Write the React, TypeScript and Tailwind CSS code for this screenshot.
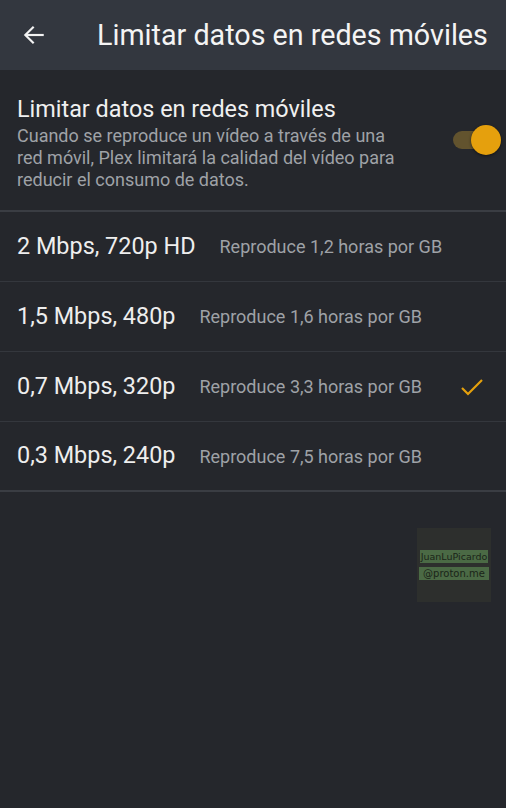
import React from "react";

const options = [
  { label: "2 Mbps, 720p HD", hint: "Reproduce 1,2 horas por GB", selected: false },
  { label: "1,5 Mbps, 480p", hint: "Reproduce 1,6 horas por GB", selected: false },
  { label: "0,7 Mbps, 320p", hint: "Reproduce 3,3 horas por GB", selected: true },
  { label: "0,3 Mbps, 240p", hint: "Reproduce 7,5 horas por GB", selected: false },
];

function BackArrow() {
  return (
    <svg width="26" height="26" viewBox="0 0 24 24" fill="none" stroke="#f2f2f2" strokeWidth="2" strokeLinecap="square">
      <path d="M20 12H5" />
      <path d="M11 5l-7 7 7 7" />
    </svg>
  );
}

function Check() {
  return (
    <svg width="24" height="20" viewBox="0 0 24 20" fill="none" stroke="#e5a00d" strokeWidth="2.2">
      <path d="M2 11l6 6L22 3" />
    </svg>
  );
}

export default function App() {
  return (
    <div className="h-[808px] w-[506px] bg-[#25272c] font-['Roboto',sans-serif] overflow-hidden">
      <header className="flex h-[70px] items-center bg-[#33373f]">
        <div className="ml-[21px] flex w-[76px] items-center">
          <BackArrow />
        </div>
        <h1 className="text-[28.7px] text-[#f4f4f4] leading-none whitespace-nowrap">Limitar datos en redes móviles</h1>
      </header>

      <div className="flex items-center pl-[17px] pr-[6px] pt-[25px] pb-[19px] border-b-2 border-[#3a3d43]">
        <div className="flex-1">
          <div className="text-[23.4px] leading-[28px] text-[#f0f0f0]">Limitar datos en redes móviles</div>
          <div className="mt-[2px] text-[18px] leading-[22px] text-[#9fa2a7]">
            Cuando se reproduce un vídeo a través de una
            <br />
            red móvil, Plex limitará la calidad del vídeo para
            <br />
            reducir el consumo de datos.
          </div>
        </div>
        <div className="relative mb-[6px] h-[18px] w-[47px]">
          <div className="absolute left-0 top-0 h-[18px] w-[38px] rounded-full bg-[#62532e]" />
          <div className="absolute left-[18px] top-[-6px] h-[30px] w-[30px] rounded-full bg-[#e5a00d] shadow-[0_1px_3px_rgba(0,0,0,0.5)]" />
        </div>
      </div>

      <div>
        {options.map((o, i) => (
          <div
            key={o.label}
            className={
              "flex h-[70px] items-center pl-[17px] pr-[22px] " +
              (i === options.length - 1 ? "border-b-2 border-[#3a3d43]" : "border-b border-[#34373d]")
            }
          >
            <span className="text-[23.4px] text-[#eeeeee] whitespace-nowrap">{o.label}</span>
            <span className="ml-[24px] flex-1 text-[18px] text-[#9fa2a7] whitespace-nowrap">{o.hint}</span>
            {o.selected && <Check />}
          </div>
        ))}
      </div>

      <div className="flex justify-end pr-[15px] pt-[36px]">
        <div className="flex h-[74px] w-[74px] flex-col items-center justify-center gap-[4px] bg-[#2d2f2d]">
          <span className="bg-[#4b6a45] px-[1px] font-['DejaVu_Sans',sans-serif] text-[9.5px] leading-[13px] text-[#1a2418]">JuanLuPicardo</span>
          <span className="bg-[#4b6a45] px-[4px] font-['DejaVu_Sans',sans-serif] text-[10px] leading-[13px] text-[#1a2418]">@proton.me</span>
        </div>
      </div>
    </div>
  );
}
